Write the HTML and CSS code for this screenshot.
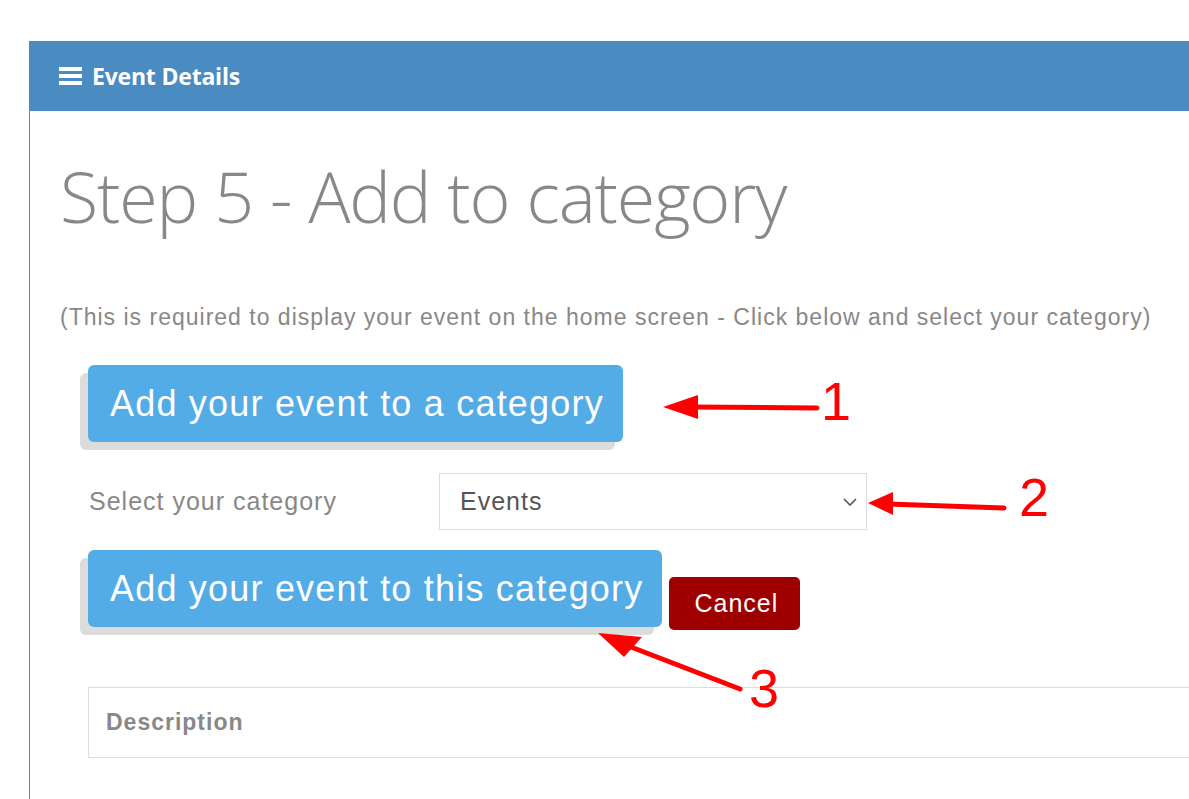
FILE: index.html
```html
<!DOCTYPE html>
<html lang="en">
<head>
<meta charset="utf-8">
<title>Event Details</title>
<link rel="stylesheet" href="styles.css">
</head>
<body>
<div class="panel">
  <div class="panel-header">
    <span class="hamburger"><i></i><i></i><i></i></span>
    <span class="panel-title">Event Details</span>
  </div>
  <div class="panel-body">
    <h1 class="step-title">Step 5 - Add to category</h1>
    <p class="hint">(This is required to display your event on the home screen - Click below and select your category)</p>
    <div class="btn-row">
      <button class="btn-big">Add your event to a category</button>
    </div>
    <div class="select-row">
      <label class="select-label">Select your category</label>
      <div class="select-box">
        <span class="select-value">Events</span>
        <svg class="chevron" width="14" height="8" viewBox="0 0 14 8"><polyline points="1,1 7,7 13,1" fill="none" stroke="#555" stroke-width="1.6"/></svg>
      </div>
    </div>
    <div class="btn-row action-row">
      <button class="btn-big">Add your event to this category</button>
      <button class="btn-cancel">Cancel</button>
    </div>
    <div class="desc-box">
      <span class="desc-title">Description</span>
    </div>
  </div>
</div>
<svg class="annotations" width="1189" height="799" viewBox="0 0 1189 799">
  <g stroke="#ff0000" stroke-width="5" stroke-linecap="round" fill="none">
    <line x1="817" y1="408" x2="690" y2="407"/>
    <line x1="1004" y1="508" x2="888" y2="504"/>
    <line x1="740" y1="689" x2="618" y2="642"/>
  </g>
  <g fill="#ff0000">
    <polygon points="663,407 698,395 698,419"/>
    <polygon points="868,503 893,492 893,515"/>
    <polygon points="598,633 642,637 624,657"/>
  </g>
  <g fill="#ff0000" font-family="Liberation Sans, Arial, sans-serif" font-size="54">
    <text x="821" y="420">1</text>
    <text x="1019" y="516">2</text>
    <text x="749" y="707">3</text>
  </g>
</svg>
</body>
</html>
```
FILE: styles.css
```css
html, body {
  margin: 0;
  padding: 0;
  background: #fff;
  overflow: hidden;
}
body {
  font-family: "Liberation Sans", Arial, sans-serif;
  width: 1189px;
  height: 799px;
  position: relative;
}
.panel {
  margin: 41px 0 0 29px;
  border-left: 1px solid #4a8bc2;
  width: 1160px;
  height: 758px;
  overflow: hidden;
}
.panel-header {
  height: 70px;
  background: #4a8bc2;
  display: flex;
  align-items: center;
  padding-left: 29px;
  gap: 10px;
}
.hamburger {
  display: flex;
  flex-direction: column;
  gap: 3px;
  width: 23px;
}
.hamburger i {
  display: block;
  height: 4px;
  background: #fff;
}
.panel-title {
  font-family: "Open Sans", sans-serif;
  font-weight: 700;
  font-size: 23px;
  letter-spacing: -0.2px;
  color: #fff;
  line-height: 1;
}
.panel-body {
  padding: 0 0 0 30px;
}
.step-title {
  margin: 50px 0 0 0;
  font-family: "Open Sans", sans-serif;
  font-weight: 300;
  font-size: 70px;
  line-height: 70px;
  color: #888;
  letter-spacing: -1.15px;
}
.hint {
  margin: 73px 0 0 0;
  font-size: 23px;
  line-height: 26px;
  letter-spacing: 1px;
  color: #888;
  white-space: nowrap;
}
.btn-row {
  display: flex;
  align-items: flex-end;
  margin-left: 28px;
}
.btn-row:first-of-type {
  margin-top: 35px;
}
.btn-big {
  height: 77px;
  padding: 0 19px 0 22px;
  border: none;
  border-radius: 6px;
  background: #53ace6;
  color: #fff;
  font-family: "Liberation Sans", Arial, sans-serif;
  font-size: 36px;
  letter-spacing: 1.2px;
  box-shadow: -8px 8px 0 #dcdcdc;
  cursor: pointer;
  white-space: nowrap;
}
.select-row {
  display: flex;
  align-items: center;
  margin: 31px 0 0 29px;
}
.select-label {
  width: 350px;
  font-size: 25px;
  letter-spacing: 1px;
  color: #888;
}
.select-box {
  height: 55px;
  border: 1px solid #ddd;
  display: flex;
  align-items: center;
  justify-content: space-between;
  padding: 0 9px 0 20px;
  box-sizing: content-box;
  width: 397px;
}
.select-value {
  font-size: 25px;
  letter-spacing: 1px;
  color: #555;
}
.chevron {
  display: block;
  margin-top: 1px;
}
.action-row {
  margin-top: 20px;
}
.btn-cancel {
  height: 53px;
  margin-left: 7px;
  margin-bottom: -3px;
  padding: 0 22px 0 25px;
  border: none;
  border-radius: 5px;
  background: #9e0000;
  color: #fff;
  font-family: "Liberation Sans", Arial, sans-serif;
  font-size: 25px;
  letter-spacing: 1px;
}
.desc-box {
  margin: 60px -20px 0 28px;
  height: 69px;
  border: 1px solid #ddd;
  display: flex;
  align-items: center;
  padding-left: 17px;
}
.desc-title {
  font-size: 23px;
  font-weight: 700;
  letter-spacing: 1px;
  color: #888;
}
.annotations {
  position: absolute;
  left: 0;
  top: 0;
  pointer-events: none;
}
```
